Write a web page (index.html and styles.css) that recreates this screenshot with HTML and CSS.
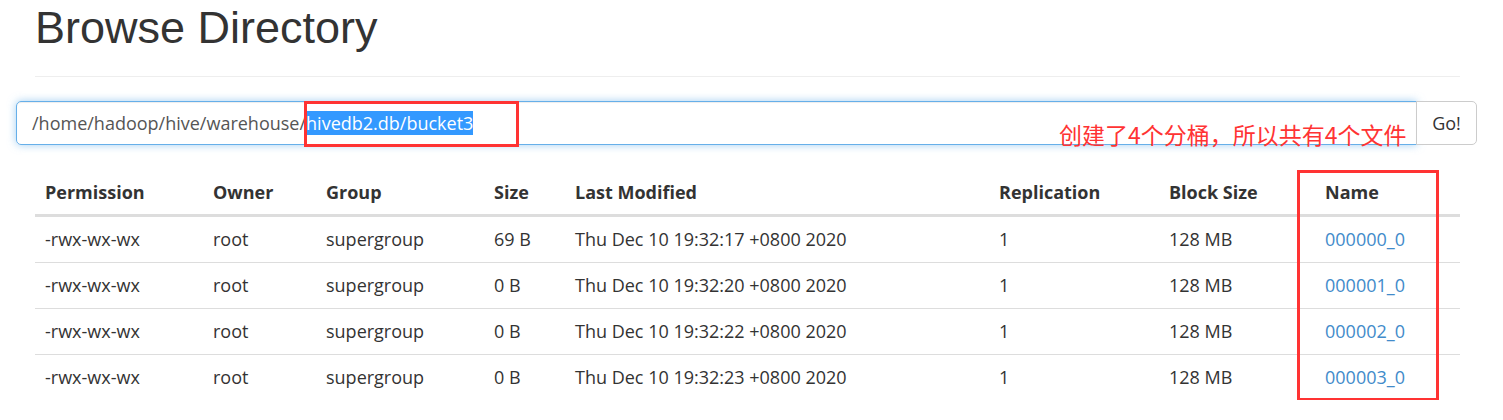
FILE: index.html
```html
<!DOCTYPE html>
<html lang="en">
<head>
  <meta charset="UTF-8" />
  <title>Browsing HDFS</title>
  <link rel="stylesheet" href="styles.css">
</head>
<body>
  <div class="page">
    <div class="page-header">
      <h1>Browse Directory</h1>
    </div>

    <form class="dir-form" onsubmit="return false;">
      <div class="input-group">
        <div class="path-input">/home/hadoop/hive/warehouse/<span class="selected">hivedb2.db/bucket3</span></div>
        <button class="btn-go" type="submit">Go!</button>
      </div>
      <div class="mark mark-path"></div>
      <div class="note">创建了4个分桶，所以共有4个文件</div>
    </form>

    <div class="table-wrap">
      <table class="dir-table">
        <thead>
          <tr>
            <th class="c-perm">Permission</th>
            <th class="c-owner">Owner</th>
            <th class="c-group">Group</th>
            <th class="c-size">Size</th>
            <th class="c-mod">Last Modified</th>
            <th class="c-rep">Replication</th>
            <th class="c-block">Block Size</th>
            <th class="c-name">Name</th>
          </tr>
        </thead>
        <tbody>
          <tr>
            <td>-rwx-wx-wx</td><td>root</td><td>supergroup</td><td>69 B</td>
            <td>Thu Dec 10 19:32:17 +0800 2020</td><td>1</td><td>128 MB</td>
            <td><a href="#">000000_0</a></td>
          </tr>
          <tr>
            <td>-rwx-wx-wx</td><td>root</td><td>supergroup</td><td>0 B</td>
            <td>Thu Dec 10 19:32:20 +0800 2020</td><td>1</td><td>128 MB</td>
            <td><a href="#">000001_0</a></td>
          </tr>
          <tr>
            <td>-rwx-wx-wx</td><td>root</td><td>supergroup</td><td>0 B</td>
            <td>Thu Dec 10 19:32:22 +0800 2020</td><td>1</td><td>128 MB</td>
            <td><a href="#">000002_0</a></td>
          </tr>
          <tr>
            <td>-rwx-wx-wx</td><td>root</td><td>supergroup</td><td>0 B</td>
            <td>Thu Dec 10 19:32:23 +0800 2020</td><td>1</td><td>128 MB</td>
            <td><a href="#">000003_0</a></td>
          </tr>
        </tbody>
      </table>
      <div class="mark mark-name"></div>
    </div>
  </div>
</body>
</html>
```

FILE: styles.css
```css
html, body {
  margin: 0;
  padding: 0;
  background: #fff;
  color: #333;
  font-family: "Open Sans", "Noto Sans", sans-serif;
  font-size: 18px;
  line-height: 25px;
}
.page {
  padding: 0 26px 0 16px;
}
.page-header {
  margin: 0 17px 0 19px;
  padding-bottom: 23px;
  border-bottom: 1px solid #eee;
}
.page-header h1 {
  margin: 3px 0 0;
  font-family: "Liberation Sans", Arial, sans-serif;
  font-size: 45px;
  font-weight: 400;
  line-height: 49.5px;
}
.dir-form {
  position: relative;
  margin: 24px 0 0;
}
.input-group {
  display: flex;
  height: 44px;
}
.path-input {
  flex: 1;
  box-sizing: border-box;
  height: 44px;
  padding: 9px 15px;
  border: 1px solid #66afe9;
  border-radius: 5px 0 0 5px;
  box-shadow: inset 0 1px 1px rgba(0,0,0,.075), 0 0 8px rgba(102,175,233,.6);
  color: #555;
  white-space: nowrap;
}
.selected {
  background: #3399ff;
  color: #fff;
}
.btn-go {
  box-sizing: border-box;
  width: 61px;
  height: 44px;
  margin-left: -1px;
  padding: 0;
  border: 1px solid #ccc;
  border-radius: 0 5px 5px 0;
  background: #fff;
  color: #333;
  font-family: inherit;
  font-size: 18px;
}
.mark {
  position: absolute;
  box-sizing: border-box;
  border: 3px solid #f33;
  pointer-events: none;
}
.mark-path {
  left: 288px;
  top: 0;
  width: 215px;
  height: 46px;
}
.note {
  position: absolute;
  left: 1043px;
  top: 20px;
  color: #f33;
  font-family: "Noto Sans CJK SC", sans-serif;
  font-size: 23px;
  line-height: 26px;
  white-space: nowrap;
}
.table-wrap {
  position: relative;
  margin: 23px 17px 0 19px;
}
.dir-table {
  width: 100%;
  border-collapse: collapse;
  border-spacing: 0;
}
.dir-table th,
.dir-table td {
  padding: 10px;
  text-align: left;
  vertical-align: top;
  line-height: 25px;
}
.dir-table th {
  padding: 12px 10px 9px;
  font-weight: 700;
  border-bottom: 3px solid #ddd;
}
.dir-table td {
  border-top: 1px solid #ddd;
}
.dir-table tbody tr:first-child td {
  border-top: 0;
}
.dir-table a {
  color: #428bca;
  text-decoration: none;
}
.c-perm { width: 148px; }
.c-owner { width: 93px; }
.c-group { width: 148px; }
.c-size { width: 61px; }
.c-mod { width: 404px; }
.c-rep { width: 150px; }
.c-block { width: 136px; }
.mark-name {
  left: 1262px;
  top: 2px;
  width: 142px;
  height: 231px;
}
```
